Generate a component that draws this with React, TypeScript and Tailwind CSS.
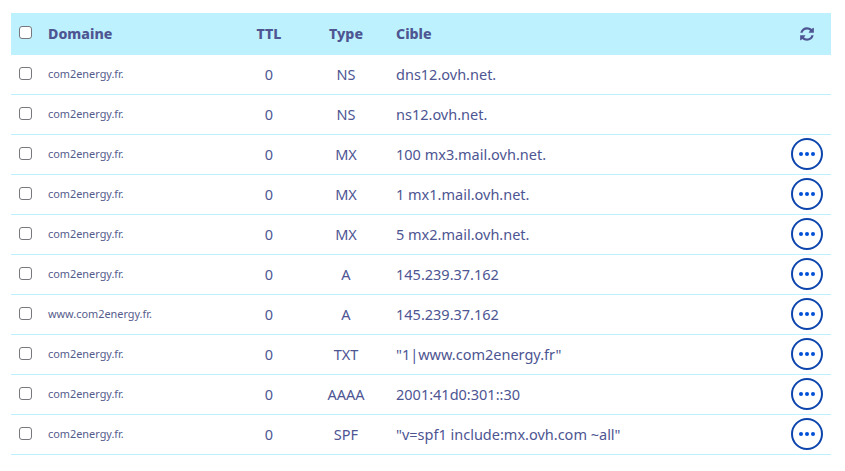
const rows = [
  { domain: "com2energy.fr.", type: "NS", target: "dns12.ovh.net.", action: false },
  { domain: "com2energy.fr.", type: "NS", target: "ns12.ovh.net.", action: false },
  { domain: "com2energy.fr.", type: "MX", target: "100 mx3.mail.ovh.net.", action: true },
  { domain: "com2energy.fr.", type: "MX", target: "1 mx1.mail.ovh.net.", action: true },
  { domain: "com2energy.fr.", type: "MX", target: "5 mx2.mail.ovh.net.", action: true },
  { domain: "com2energy.fr.", type: "A", target: "145.239.37.162", action: true },
  { domain: "www.com2energy.fr.", type: "A", target: "145.239.37.162", action: true },
  { domain: "com2energy.fr.", type: "TXT", target: "\"1|www.com2energy.fr\"", action: true },
  { domain: "com2energy.fr.", type: "AAAA", target: "2001:41d0:301::30", action: true },
  { domain: "com2energy.fr.", type: "SPF", target: "\"v=spf1 include:mx.ovh.com ~all\"", action: true },
];

function Check() {
  return <span className="block w-[13px] h-[13px] bg-white border border-[#77777d] rounded-[3px]" />;
}

export default function App() {
  return (
    <div className="w-[845px] h-[471px] bg-white pt-[13px] px-[11px] text-[#4d5592] font-['Noto_Sans',sans-serif]">
      <div className="w-[820px]">
        <div className="grid grid-cols-[37px_182px_78px_76px_1fr_48px] items-center h-[42px] bg-[#bdf1fd] font-extrabold text-[14.2px]">
          <div className="pl-2 -mt-[3px]"><Check /></div>
          <div className="-mt-[1px]">Domaine</div>
          <div className="text-center -mt-[1px]">TTL</div>
          <div className="text-center -mt-[1px]">Type</div>
          <div className="pl-3 -mt-[1px]">Cible</div>
          <div className="flex justify-center -mt-[1px]">
            <svg viewBox="0 0 1792 1792" className="w-[16px] h-[16px] fill-current">
              <path d="M1639 1056q0 5-1 7-64 268-268 434.5t-478 166.5q-146 0-282.5-55t-243.5-157l-129 129q-19 19-45 19t-45-19-19-45v-448q0-26 19-45t45-19h448q26 0 45 19t19 45-19 45l-137 137q71 66 161 102t187 36q134 0 250-65t186-179q11-17 53-117 8-23 30-23h192q13 0 22.5 9.5t9.5 22.5zm25-800v448q0 26-19 45t-45 19h-448q-26 0-45-19t-19-45 19-45l138-138q-148-137-349-137-134 0-250 65t-186 179q-11 17-53 117-8 23-30 23h-199q-13 0-22.5-9.5t-9.5-22.5v-7q65-268 270-434.5t480-166.5q146 0 284 55.5t245 156.5l130-129q19-19 45-19t45 19 19 45z" />
            </svg>
          </div>
        </div>
        {rows.map((r, i) => (
          <div
            key={i}
            className="grid grid-cols-[37px_182px_78px_76px_1fr_48px] items-center h-[40px] border-b border-[#bdf1fd]"
          >
            <div className="pl-2 -mt-[3px]"><Check /></div>
            <div className="text-[10.9px] text-[#555c8c]">{r.domain}</div>
            <div className="text-center text-[14.5px]">0</div>
            <div className="text-center text-[14.5px]">{r.type}</div>
            <div className="pl-3 text-[14.5px]">{r.target}</div>
            <div className="flex justify-center">
              {r.action && (
                <button className="w-[32px] h-[32px] -mt-[2px] rounded-full border-2 border-[#0d45ad] flex items-center justify-center gap-[2px]">
                  <span className="w-[4px] h-[4px] rounded-full bg-[#0050d7]" />
                  <span className="w-[4px] h-[4px] rounded-full bg-[#0050d7]" />
                  <span className="w-[4px] h-[4px] rounded-full bg-[#0050d7]" />
                </button>
              )}
            </div>
          </div>
        ))}
      </div>
    </div>
  );
}
